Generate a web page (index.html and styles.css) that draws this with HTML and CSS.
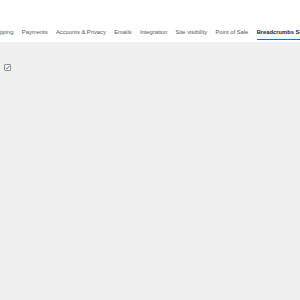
FILE: index.html
```html
<!DOCTYPE html>
<html>
<head>
<meta charset="utf-8">
<link rel="stylesheet" href="styles.css">
</head>
<body>
<div class="tabbar">
  <div class="tabs">
    <span class="tab">Shipping</span>
    <span class="tab">Payments</span>
    <span class="tab">Accounts &amp; Privacy</span>
    <span class="tab">Emails</span>
    <span class="tab">Integration</span>
    <span class="tab">Site visibility</span>
    <span class="tab">Point of Sale</span>
    <span class="tab active">Breadcrumbs Settings</span>
  </div>
</div>
<div class="content">
  <span class="check">
    <svg width="5" height="5" viewBox="0 0 10 10"><path d="M1.5 5.2 L4 7.6 L8.6 2.2" fill="none" stroke="#2271b1" stroke-width="2"/></svg>
  </span>
</div>
</body>
</html>
```
FILE: styles.css
```css
html, body { margin: 0; padding: 0; }
body { width: 300px; height: 300px; overflow: hidden; background: #f0f0f1; font-family: "Liberation Sans", Arial, sans-serif; }
.tabbar { background: #fff; height: 42px; overflow: hidden; }
.tabs { display: flex; gap: 8.3px; margin-left: -9px; padding-top: 28px; white-space: nowrap; }
.tab { font-size: 5.8px; color: #50575e; height: 12px; line-height: 8px; box-sizing: border-box; }
.tab.active { color: #1d2327; font-weight: bold; border-bottom: 1px solid #2271b1; }
.content { padding: 22px 4px; }
.check { display: flex; align-items: center; justify-content: center; width: 5px; height: 5px; border: 1px solid #8c8f94; border-radius: 1px; background: #fff; }
```
